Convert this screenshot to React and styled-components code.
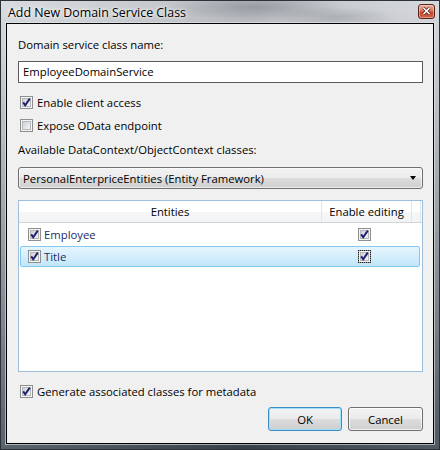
import React from "react"
import styled, { createGlobalStyle } from "styled-components"

const GlobalStyle = createGlobalStyle`
  html, body {
    margin: 0;
    padding: 0;
    background: #3c4550;
  }
  body {
    font-family: "Open Sans", "Noto Sans", sans-serif;
    font-size: 11.3px;
  }
`

const Frame = styled.div`
  width: 440px;
  height: 450px;
  box-sizing: border-box;
  border: 1px solid #2b323a;
  display: flex;
  flex-direction: column;
  padding: 0 5px 5px 5px;
  background:
    linear-gradient(to right, rgba(255,255,255,0.15), rgba(0,0,0,0.1) 55%, rgba(255,255,255,0.1)),
    linear-gradient(to bottom, #d3d6da 0%, #c4c8cc 12%, #9aa1a8 40%, #6c747d 70%, #46505a 92%, #3e4852 100%);
`

const TitleBar = styled.div`
  height: 22px;
  display: flex;
  align-items: center;
  justify-content: space-between;
  padding: 0 0 0 2px;
  background:
    radial-gradient(ellipse 90px 14px at 250px 6px, rgba(120,128,136,0.55), transparent),
    radial-gradient(ellipse 60px 10px at 330px 16px, rgba(140,146,152,0.45), transparent);
`

const Title = styled.span`
  font-size: 12.4px;
  color: #000;
  text-shadow: 0 0 6px #fff, 0 0 3px #fff;
`

const CloseButton = styled.div`
  width: 15px;
  height: 13px;
  margin: 0 -1px 2px 0;
  border: 1px solid #5a2418;
  border-radius: 3px;
  background: linear-gradient(to bottom, #e8b0a2 0%, #d77a62 45%, #c3482c 55%, #d2654a 100%);
  box-shadow: inset 0 0 0 1px rgba(255,255,255,0.35);
  display: flex;
  align-items: center;
  justify-content: center;
`

const Client = styled.div`
  flex: 1;
  border: 1px solid #000;
  box-shadow: 0 0 0 1px rgba(230,234,238,0.6);
  background: #f0f0f0;
  padding: 13px 10px 11px 11px;
  display: flex;
  flex-direction: column;
`

const Label = styled.div`
  height: 16px;
  line-height: 16px;
  color: #000;
  margin-top: ${p => p.$top || 0}px;
`

const TextBox = styled.div`
  height: 22px;
  box-sizing: border-box;
  margin-top: 8px;
  border: 1px solid #5b5b5b;
  background: #fff;
  padding: 0 4px;
  line-height: 20px;
  color: #000;
`

const CheckRow = styled.label`
  display: flex;
  align-items: center;
  gap: 4px;
  height: 18px;
  margin-top: ${p => p.$top || 0}px;
  padding-left: 2px;
  color: #000;
`

const Combo = styled.div`
  height: 22px;
  box-sizing: border-box;
  margin-top: 9px;
  border: 1px solid #707070;
  border-radius: 3px;
  background: linear-gradient(to bottom, #f2f2f2 0%, #ebebeb 50%, #dddddd 50%, #cfcfcf 100%);
  box-shadow: inset 0 0 0 1px rgba(255,255,255,0.6);
  display: flex;
  align-items: center;
  justify-content: space-between;
  padding: 0 6px 0 4px;
  color: #000;
`

const Arrow = styled.span`
  width: 0;
  height: 0;
  border-left: 3.5px solid transparent;
  border-right: 3.5px solid transparent;
  border-top: 4px solid #000;
`

const ListView = styled.div`
  height: 172px;
  box-sizing: border-box;
  margin-top: 11px;
  border: 1px solid #9dbfdc;
  background: #fff;
  display: flex;
  flex-direction: column;
`

const HeaderRow = styled.div`
  display: grid;
  grid-template-columns: 303px 90px 9px;
  height: 21px;
  border-bottom: 1px solid #d5d5d5;
  background: linear-gradient(to bottom, #ffffff 0%, #ffffff 50%, #f6f7f8 51%, #f2f3f4 100%);
`

const HeaderCell = styled.div`
  display: flex;
  align-items: center;
  justify-content: center;
  border-right: 1px solid #e2e6ea;
  color: #000;
`

const Row = styled.div`
  display: grid;
  grid-template-columns: 301px 90px;
  align-items: center;
  height: 19px;
  margin: 1px 2px 0 1px;
  border: 1px solid ${p => (p.$selected ? "#84c9f2" : "transparent")};
  border-radius: 2px;
  background: ${p =>
    p.$selected
      ? "linear-gradient(to bottom, #e6f5fd 0%, #d4eefc 50%, #bfe6fa 100%)"
      : "transparent"};
  color: #1e2c66;
`

const NameCell = styled.div`
  display: flex;
  align-items: center;
  gap: 3px;
  padding-left: 7px;
`

const EditCell = styled.div`
  display: flex;
  align-items: center;
  padding-left: 36px;
`

const Focus = styled.span`
  display: flex;
  outline: ${p => (p.$on ? "1px dotted #222" : "none")};
  outline-offset: -1px;
`

const ButtonBar = styled.div`
  display: flex;
  justify-content: flex-end;
  gap: 6px;
  margin-top: 7px;
`

const Button = styled.button`
  width: ${p => p.$w}px;
  height: 24px;
  box-sizing: border-box;
  border: 1px solid ${p => (p.$default ? "#3c8fc4" : "#707070")};
  border-radius: 3px;
  background: linear-gradient(to bottom, #f2f2f2 0%, #ebebeb 50%, #dddddd 50%, #cfcfcf 100%);
  box-shadow: inset 0 0 0 1px ${p => (p.$default ? "#9ee0fb" : "rgba(255,255,255,0.7)")};
  font-family: inherit;
  font-size: 11.3px;
  color: #000;
  padding: 0;
`

function CheckBox({ checked }) {
  return (
    <svg width="13" height="13" viewBox="0 0 13 13">
      <defs>
        <linearGradient id="cbIn" x1="0" y1="0" x2="1" y2="1">
          <stop offset="0" stopColor="#cbcfd5" />
          <stop offset="1" stopColor="#f7f7f7" />
        </linearGradient>
      </defs>
      <rect x="0.5" y="0.5" width="12" height="12" fill="#f4f4f4" stroke="#8e8f8f" />
      <rect x="2.5" y="2.5" width="8" height="8" fill="url(#cbIn)" stroke="#b4b8bd" />
      {checked && (
        <path d="M3.2 6.4 L5.2 9.4 L9.8 2.6" fill="none" stroke="#21216b" strokeWidth="1.9" />
      )}
    </svg>
  )
}

const entities = [
  { name: "Employee", selected: false },
  { name: "Title", selected: true },
]

export default function App() {
  return (
    <>
      <GlobalStyle />
      <Frame>
        <TitleBar>
          <Title>Add New Domain Service Class</Title>
          <CloseButton>
            <svg width="9" height="8" viewBox="0 0 9 8">
              <path d="M1.5 1 L7.5 7 M7.5 1 L1.5 7" stroke="#4a2018" strokeWidth="3" />
              <path d="M1.5 1 L7.5 7 M7.5 1 L1.5 7" stroke="#fff" strokeWidth="1.6" />
            </svg>
          </CloseButton>
        </TitleBar>
        <Client>
          <Label>Domain service class name:</Label>
          <TextBox>EmployeeDomainService</TextBox>
          <CheckRow $top={10}>
            <CheckBox checked />
            Enable client access
          </CheckRow>
          <CheckRow $top={5}>
            <CheckBox />
            Expose OData endpoint
          </CheckRow>
          <Label $top={8}>Available DataContext/ObjectContext classes:</Label>
          <Combo>
            PersonalEnterpriceEntities (Entity Framework)
            <Arrow />
          </Combo>
          <ListView>
            <HeaderRow>
              <HeaderCell>Entities</HeaderCell>
              <HeaderCell>Enable editing</HeaderCell>
              <HeaderCell />
            </HeaderRow>
            {entities.map(e => (
              <Row key={e.name} $selected={e.selected}>
                <NameCell>
                  <CheckBox checked />
                  {e.name}
                </NameCell>
                <EditCell>
                  <Focus $on={e.selected}>
                    <CheckBox checked />
                  </Focus>
                </EditCell>
              </Row>
            ))}
          </ListView>
          <CheckRow $top={10}>
            <CheckBox checked />
            Generate associated classes for metadata
          </CheckRow>
          <ButtonBar>
            <Button $w={74} $default>OK</Button>
            <Button $w={75}>Cancel</Button>
          </ButtonBar>
        </Client>
      </Frame>
    </>
  )
}
